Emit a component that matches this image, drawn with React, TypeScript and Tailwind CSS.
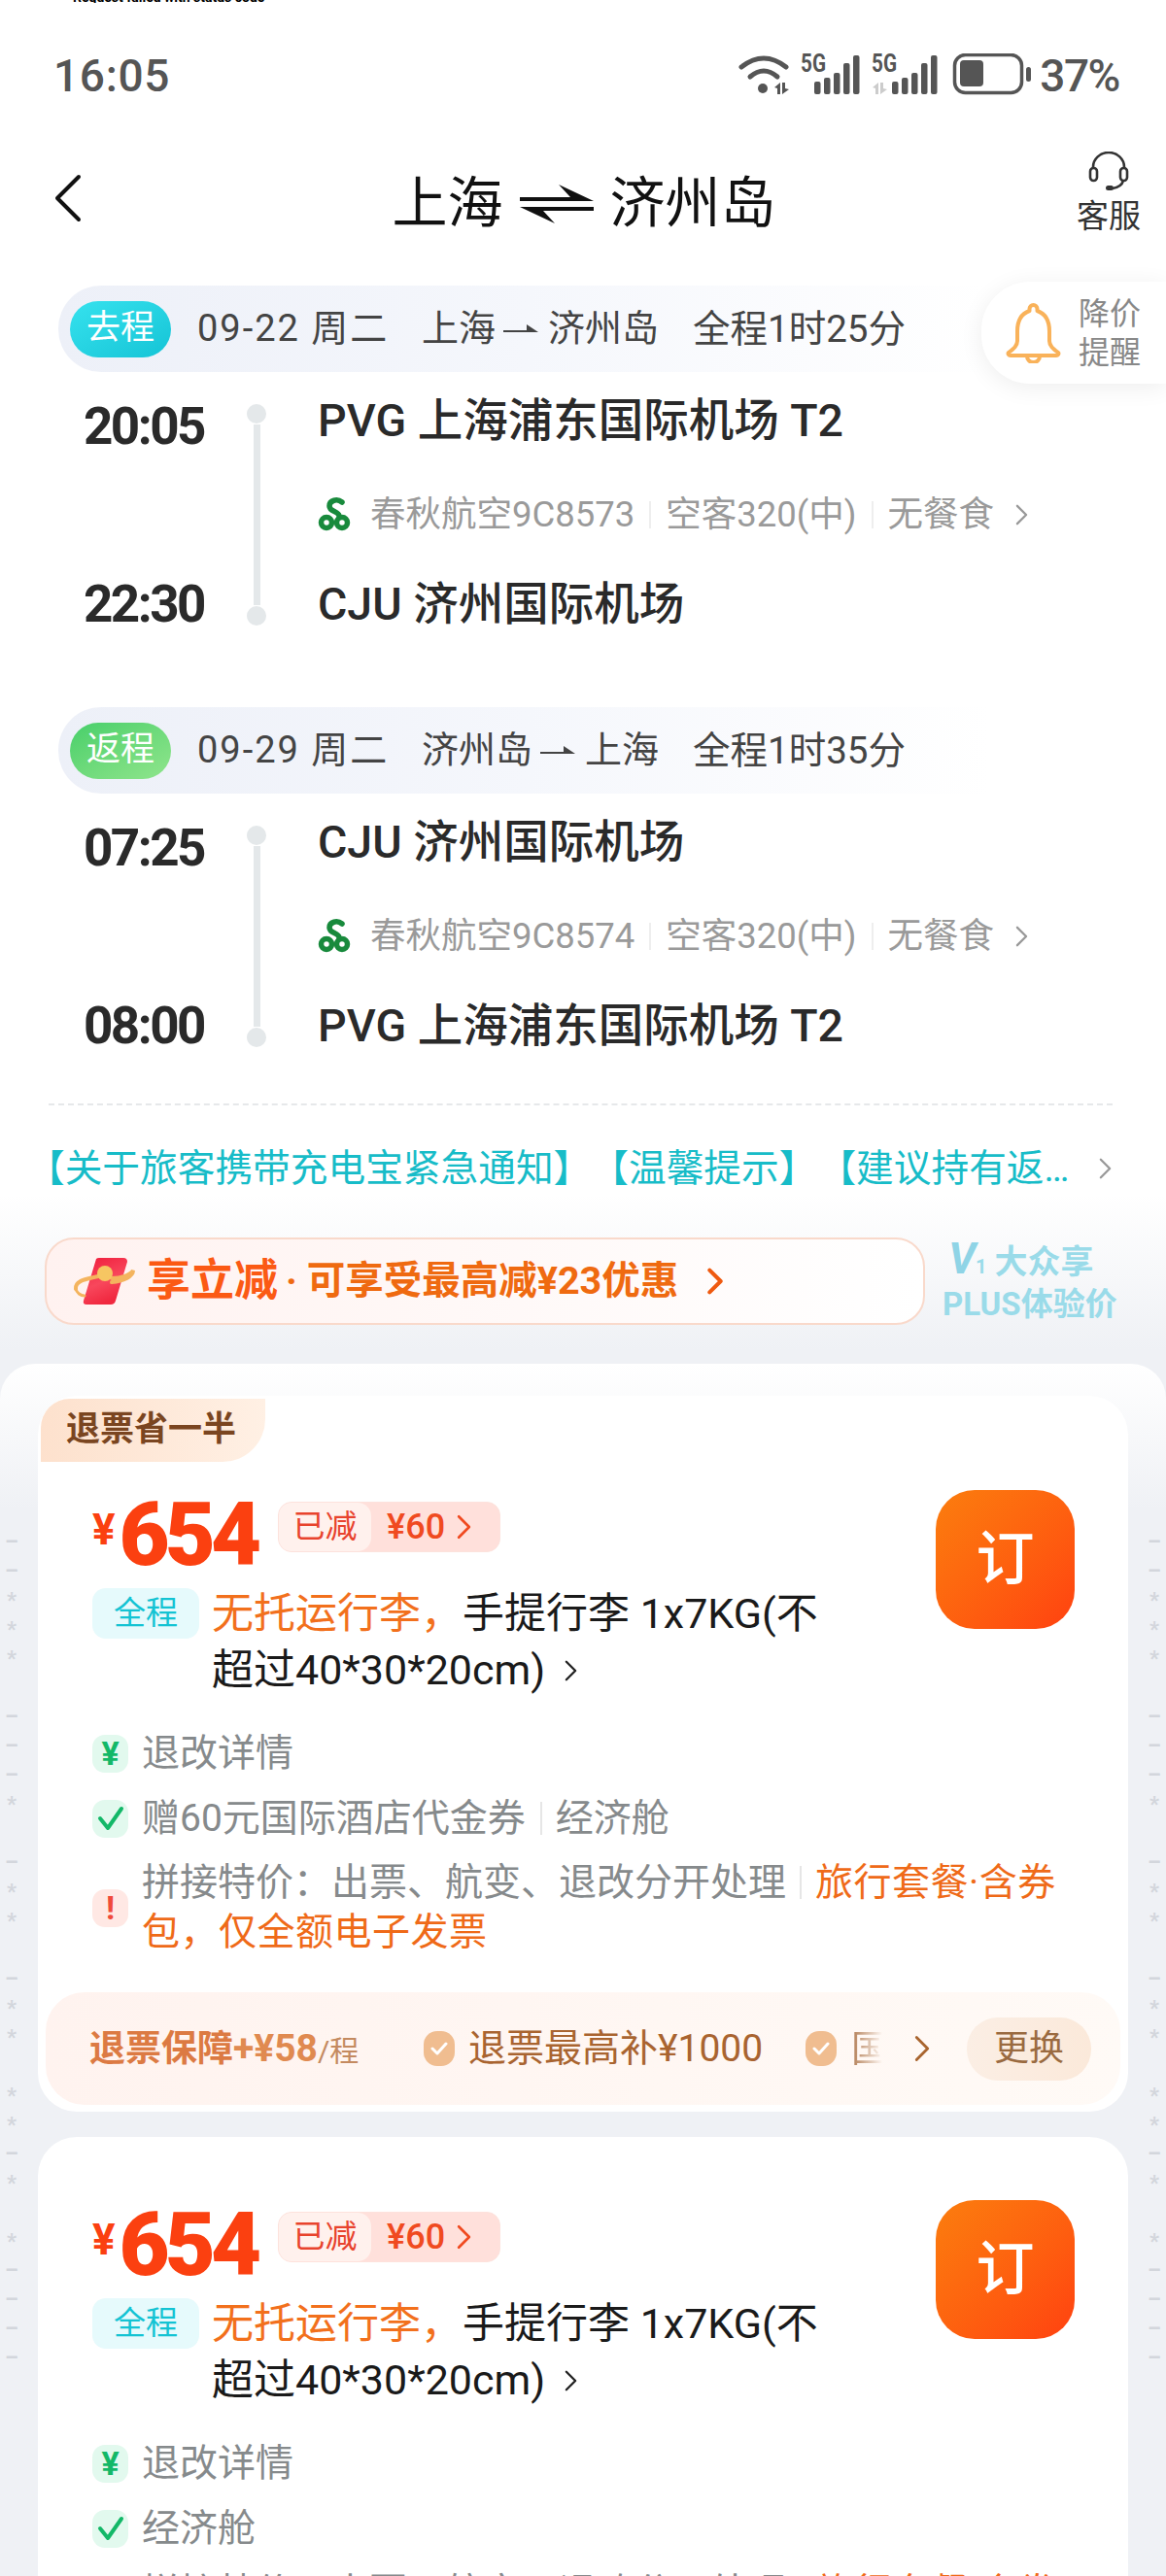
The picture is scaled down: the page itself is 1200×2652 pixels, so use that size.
import React from 'react';

const Chevron = ({className, w = 14, h = 24, sw = 2.5}: {className: string; w?: number; h?: number; sw?: number}) => (
  <svg width={w} height={h} viewBox="0 0 14 24" fill="none" className={className}>
    <path d="M2 2 L12 12 L2 22" stroke="currentColor" strokeWidth={sw} strokeLinecap="round" strokeLinejoin="round" />
  </svg>
);

const signalBars = [
  {y: 29, h: 13},
  {y: 25, h: 17},
  {y: 20, h: 22},
  {y: 10, h: 32},
  {y: 2, h: 40},
];

const StatusIcons = () => (
  <svg width="301" height="44" viewBox="0 0 301 44" className="text-[#555]">
    {/* wifi */}
    <g fill="none" stroke="currentColor" strokeWidth="5" strokeLinecap="round">
      <path d="M3 14 Q26 -4 49 14" />
      <path d="M12 24 Q26 12 40 24" />
    </g>
    <circle cx="25" cy="36" r="5" fill="currentColor" />
    <path d="M37 35 l6 -5 v12 h-3 v-6z M45 30 h3 v6 l4 1 l-7 5z" fill="currentColor" />
    {/* sim 1 */}
    <text x="64" y="19" fontFamily="Roboto" fontWeight="700" fontSize="25" fill="currentColor" textLength="26" lengthAdjust="spacingAndGlyphs">5G</text>
    {signalBars.map((b, i) => (
      <rect key={i} x={78 + i * 10} y={b.y} width="6.5" height={b.h} rx="2" fill="currentColor" />
    ))}
    {/* sim 2 */}
    <text x="137" y="19" fontFamily="Roboto" fontWeight="700" fontSize="25" fill="currentColor" textLength="26" lengthAdjust="spacingAndGlyphs">5G</text>
    <path d="M138 35 l6 -5 v12 h-3 v-6z M146 30 h3 v6 l4 1 l-7 5z" fill="#ccc" />
    {signalBars.map((b, i) => (
      <rect key={i} x={158 + i * 10} y={b.y} width="6.5" height={b.h} rx="2" fill="currentColor" />
    ))}
    {/* battery */}
    <rect x="222.5" y="1.5" width="69" height="39" rx="11" fill="none" stroke="currentColor" strokeWidth="3.5" />
    <rect x="228" y="7" width="24" height="27" rx="4" fill="currentColor" />
    <rect x="296" y="14" width="5" height="15" rx="2.5" fill="currentColor" />
  </svg>
);

const Headset = () => (
  <svg width="42" height="42" viewBox="0 0 42 42" fill="none" stroke="#333" strokeWidth="2.6">
    <path d="M5 18 V16 a16 15 0 0 1 32 0 V18" />
    <rect x="2" y="17" width="7" height="13" rx="3.5" />
    <rect x="33" y="17" width="7" height="13" rx="3.5" />
    <path d="M36 30 c-1 4 -5 7 -11 8" />
    <rect x="18" y="35" width="8" height="5" rx="2.5" fill="#333" stroke="none" />
  </svg>
);

const Bell = () => (
  <svg width="57" height="63" viewBox="0 0 57 63" fill="none" stroke="#f9b25a" strokeWidth="4" strokeLinejoin="round">
    <path d="M28.5 3 a4 4 0 0 1 4 4 v2 C41 12 45 20 45 30 v10 c0 5 4 8 9 12 c1 1 0 3 -2 3 H5 c-2 0 -3 -2 -2 -3 c5 -4 9 -7 9 -12 V30 c0 -10 4 -18 12.5 -21 V7 a4 4 0 0 1 4 -4 z" />
    <path d="M22 56 a6.5 6 0 0 0 13 0" />
  </svg>
);

const AirlineLogo = () => (
  <svg width="34" height="36" viewBox="0 0 34 36" fill="none" stroke="#188a3c" strokeWidth="5.5">
    <path d="M25 5 C20 1 12 3 12 9 C12 15 21 14 22 19" strokeLinecap="round" />
    <circle cx="9" cy="26" r="5.5" />
    <circle cx="25" cy="26" r="5.5" />
  </svg>
);

const RedPacket = () => (
  <svg width="68" height="50" viewBox="0 0 68 50" fill="none">
    <defs>
      <linearGradient id="packet" x1="0" y1="0" x2="0.4" y2="1">
        <stop offset="0" stopColor="#ef1b3a" />
        <stop offset="0.6" stopColor="#f8475c" />
        <stop offset="1" stopColor="#f0283f" />
      </linearGradient>
    </defs>
    <path d="M24 2 Q25 1 27 1 H52 Q56 1 56 5 L44 45 Q43 49 39 49 H14 Q10 49 11 45 Z" fill="url(#packet)" />
    <path d="M3 33 C2 24 14 23 26 20 M40 22 C50 22 60 18 62 14 C62 20 52 25 40 26" stroke="#f4b45e" strokeWidth="4" strokeLinecap="round" />
    <path d="M3 33 C4 37 8 40 12 40" stroke="#f4b45e" strokeWidth="3" strokeLinecap="round" />
    <circle cx="33" cy="17" r="8" fill="#f6c662" />
  </svg>
);

const RouteArrow = () => (
  <svg width="38" height="12" viewBox="0 0 38 12">
    <path d="M0 7 H24 V1 L36 9 H0 Z" fill="#444" />
  </svg>
);

const Leg = ({label, pill, date, from, to, duration, dep, arr, depAirport, arrAirport, flight}: {
  label: string;
  pill: string;
  date: string;
  from: string;
  to: string;
  duration: string;
  dep: string;
  arr: string;
  depAirport: string;
  arrAirport: string;
  flight: string;
}) => (
  <div>
    <div className="ml-[60px] w-[960px] h-[89px] flex items-center rounded-l-[44px] bg-gradient-to-r from-[#edf0f8] via-[#f5f7fc] to-white pl-[12px]">
      <div className={`w-[104px] h-[58px] rounded-[29px] flex items-center justify-center text-white text-[35px] ${pill}`}>{label}</div>
      <div className="ml-[27px] w-[195px] text-[38px] text-[#444] tracking-[2px] whitespace-nowrap">{date}</div>
      <div className="ml-[36px] w-[244px] flex items-center justify-between text-[38px] text-[#444]">
        <span>{from}</span>
        <RouteArrow />
        <span>{to}</span>
      </div>
      <div className="ml-[35px] text-[38.5px] text-[#444] whitespace-nowrap">{duration}</div>
    </div>
    <div className="mt-[20px] h-[247px] flex">
      <div className="w-[254px] pl-[60px] pt-[8px] flex flex-col justify-between">
        <div className="w-[176px] text-center text-[53px] leading-[56px] font-bold text-[#2a2a2a] tracking-[-2.5px]">{dep}</div>
        <div className="w-[176px] text-center text-[53px] leading-[56px] font-bold text-[#2a2a2a] tracking-[-2.5px]">{arr}</div>
      </div>
      <div className="w-[20px] pt-[13px] pb-[6px] flex flex-col items-center">
        <div className="w-[20px] h-[20px] rounded-full bg-[#e4e8ea]" />
        <div className="w-[7px] flex-1 my-[1px] bg-[#e4e8ea]" />
        <div className="w-[20px] h-[20px] rounded-full bg-[#e4e8ea]" />
      </div>
      <div className="ml-[53px] pt-[2px] flex flex-col justify-between">
        <div className="text-[46.5px] leading-[56px] font-medium text-[#2a2a2a] whitespace-nowrap">{depAirport}</div>
        <div className="mt-[5px] flex items-center text-[36.5px] leading-[44px] text-[#9a9a9a] whitespace-nowrap">
          <AirlineLogo />
          <span className="ml-[20px]">春秋航空{flight}</span>
          <span className="mx-[15px] w-[2px] h-[28px] bg-[#eee]" />
          <span>空客320(中)</span>
          <span className="mx-[15px] w-[2px] h-[28px] bg-[#eee]" />
          <span>无餐食</span>
          <Chevron className="ml-[22px] text-[#999]" w={13} h={22} />
        </div>
        <div className="text-[46.5px] leading-[56px] font-medium text-[#2a2a2a] whitespace-nowrap">{arrAirport}</div>
      </div>
    </div>
  </div>
);

const MiniBadge = ({tone, children}: {tone: string; children: React.ReactNode}) => (
  <div className={`w-[37px] h-[39px] shrink-0 rounded-[13px] flex items-center justify-center ${tone}`}>{children}</div>
);

const CheckSvg = ({color}: {color: string}) => (
  <svg width="28" height="26" viewBox="0 0 28 26" fill="none">
    <path d="M3 13 L11 23 L25 3" stroke={color} strokeWidth="4" strokeLinecap="round" strokeLinejoin="round" />
  </svg>
);

const SmallCheck = () => (
  <div className="w-[32px] h-[36px] shrink-0 rounded-[14px] bg-[#f0bd90] flex items-center justify-center">
    <svg width="18" height="14" viewBox="0 0 18 14" fill="none">
      <path d="M2 7 L7 12 L16 2" stroke="white" strokeWidth="3" strokeLinecap="round" strokeLinejoin="round" />
    </svg>
  </div>
);

const FareCard = ({badge, gift, bar}: {badge?: boolean; gift: boolean; bar: boolean}) => (
  <div className={`relative bg-white rounded-[40px] pb-[7px] ${badge ? 'pt-[97px]' : 'pt-[65px]'}`}>
    {badge && (
      <div className="absolute left-[3px] top-[3px] w-[231px] h-[65px] rounded-tl-[30px] rounded-br-[44px] rounded-tr-none bg-gradient-to-r from-[#fde1cd] to-[#fff0e4] flex items-center pl-[26px] text-[35px] font-bold text-[#7a4520]">
        退票省一半
      </div>
    )}
    <div className="pl-[56px] pr-[55px] flex justify-between">
      <div>
        <div className="h-[98px] flex">
          <span className="text-[44px] leading-[82px] font-bold text-[#fb4010]">¥</span>
          <span className="text-[90px] leading-[94px] font-black text-[#fb4010] tracking-[-5px] ml-[4px]">654</span>
          <div className="ml-[22px] mt-[12px] h-[52px] w-[229px] flex rounded-[14px] border border-[#fde2dc] bg-[#ffe0db] overflow-hidden">
            <div className="w-[95px] rounded-r-[14px] bg-[#fff1ed] flex items-center justify-center text-[33px] text-[#e8432d]">已减</div>
            <div className="flex-1 flex items-center pl-[16px] text-[36px] font-medium text-[#f04a20]">
              ¥60
              <Chevron className="ml-[12px] text-[#f04a20]" w={15} h={26} sw={2.5} />
            </div>
          </div>
        </div>
        <div className="flex items-start gap-[13px]">
          <div className="w-[110px] h-[52px] mt-[3px] rounded-[14px] bg-[#e6fafc] flex items-center justify-center text-[33px] text-[#14c3d3]">全程</div>
          <div className="text-[43px] leading-[58px] text-[#1a1a1a] whitespace-nowrap">
            <span className="text-[#f2701c]">无托运行李，</span>手提行李 1x7KG(不
            <br />
            超过40*30*20cm)
            <Chevron className="inline-block ml-[20px] mb-[6px] text-[#222]" w={13} h={24} />
          </div>
        </div>
      </div>
      <div className="w-[143px] h-[143px] rounded-[40px] bg-gradient-to-br from-[#fb7d0e] to-[#ff4010] flex items-center justify-center text-white text-[60px] font-medium">
        订
      </div>
    </div>
    <div className="mt-[31px] pl-[56px] flex flex-col gap-[15px] text-[39px] leading-[52px] text-[#868a8c]">
      <div className="flex items-center gap-[14px]">
        <MiniBadge tone="bg-[#e2f9ee]"><span className="text-[#13b868] text-[34px] font-bold">¥</span></MiniBadge>
        <span>退改详情</span>
      </div>
      <div className="flex items-center gap-[14px]">
        <MiniBadge tone="bg-[#e2f9ee]"><CheckSvg color="#13b868" /></MiniBadge>
        {gift ? <span>赠60元国际酒店代金券</span> : <span>经济舱</span>}
        {gift && <span className="ml-[1px] w-[2px] h-[34px] bg-[#e6e6e6]" />}
        {gift && <span>经济舱</span>}
      </div>
      <div className="flex items-center gap-[14px]">
        <MiniBadge tone="bg-[#ffe8e4]"><span className="text-[#f04a3a] text-[34px] font-bold">!</span></MiniBadge>
        <div className="leading-[51px] whitespace-nowrap">
          拼接特价：出票、航变、退改分开处理
          <span className="inline-block mx-[14px] w-[2px] h-[34px] bg-[#e6e6e6] align-[-4px]" />
          <span className="text-[#ef6a18] tracking-[0.5px]">旅行套餐·含券<br />包，仅全额电子发票</span>
        </div>
      </div>
    </div>
    {bar && (
      <div className="mt-[36px] mx-[8px] h-[116px] rounded-[40px] bg-gradient-to-r from-[#fff3ef] to-[#fffaf6] flex items-center pl-[45px]">
        <div className="w-[344px] whitespace-nowrap flex items-baseline">
          <span className="text-[37px] font-bold text-[#dc7a43]">退票保障</span>
          <span className="text-[39px] font-bold text-[#e08a50]">+¥58</span>
          <span className="text-[30px] text-[#c48a60]">/程</span>
        </div>
        <SmallCheck />
        <span className="ml-[14px] w-[306px] text-[39px] text-[#a96430] whitespace-nowrap">退票最高补¥1000</span>
        <div className="ml-[41px]"><SmallCheck /></div>
        <span className="ml-[15px] w-[32px] overflow-hidden text-[38px] whitespace-nowrap bg-gradient-to-r from-[#b07a50] to-transparent bg-clip-text text-transparent">国际</span>
        <Chevron className="ml-[33px] text-[#a9652f]" w={16} h={30} sw={2.5} />
        <div className="ml-[38px] w-[128px] h-[65px] rounded-[32px] bg-gradient-to-r from-[#fbeee4] to-[#fbe9da] flex items-center justify-center text-[36px] text-[#9a6a40]">更换</div>
      </div>
    )}
  </div>
);

const sideMarks = [
  '–', '–', '*', '*', '*', '', '–', '–', '–', '*', '', '–', '*', '*', '', '–', '*', '*', '', '*', '*',
  '–', '*', '', '*', '–', '–', '–', '–',
];

const SideMarks = ({className}: {className: string}) => (
  <div className={`absolute top-[169px] w-[24px] flex flex-col text-[#d3d6dc] text-[22px] font-bold ${className}`}>
    {sideMarks.map((m, i) => (
      <div key={i} className="h-[30px] leading-[30px] text-center">{m}</div>
    ))}
  </div>
);

const App = () => {
  return (
    <div className="relative w-[1200px] h-[2652px] overflow-hidden bg-[linear-gradient(#fff_1230px,#eff1f5_1390px)] font-['Roboto','Noto_Sans_CJK_SC',sans-serif]">
      <div className="h-[3px] overflow-hidden pl-[75px]">
        <div className="-mt-[10px] text-[14px] leading-[14px] font-bold text-black whitespace-nowrap">Request failed with status code</div>
      </div>

      {/* status bar */}
      <div className="h-[127px] pt-[52px] pl-[55px] pr-[48px] flex items-start justify-between text-[#555]">
        <span className="text-[46px] leading-[46px] font-medium tracking-[0.7px]">16:05</span>
        <div className="flex items-start">
          <StatusIcons />
          <span className="ml-[9px] text-[46px] leading-[46px] font-medium tracking-[-1.5px]">37%</span>
        </div>
      </div>

      {/* nav */}
      <div className="h-[164px] pb-[8px] relative flex items-start justify-between pl-[55px] pr-[26px]">
        <svg width="30" height="50" viewBox="0 0 30 50" fill="none" className="mt-[49px]">
          <path d="M26 3 L4 25 L26 47" stroke="#111" strokeWidth="4" strokeLinecap="round" strokeLinejoin="round" />
        </svg>
        <div className="mt-[50px] ml-[309px] flex items-center text-[57px] leading-[60px] text-[#111]">
          <span>上海</span>
          <svg width="76" height="46" viewBox="0 0 76 46" className="mx-[17px]">
            <path d="M0 16 H52 L40 3 L76 20 H0 Z" fill="#111" />
            <path d="M76 30 H24 L36 43 L0 26 H76 Z" fill="#111" />
          </svg>
          <span>济州岛</span>
        </div>
        <div className="mt-[26px] flex flex-col items-center w-[66px] ml-[300px]">
          <Headset />
          <span className="mt-[7px] text-[33px] leading-[36px] text-[#333] whitespace-nowrap">客服</span>
        </div>
      </div>

      <Leg
        label="去程"
        pill="bg-gradient-to-br from-[#35e2ee] to-[#12c4d6]"
        date="09-22 周二"
        from="上海"
        to="济州岛"
        duration="全程1时25分"
        dep="20:05"
        arr="22:30"
        depAirport="PVG 上海浦东国际机场 T2"
        arrAirport="CJU 济州国际机场"
        flight="9C8573"
      />
      <div className="h-[78px]" />
      <Leg
        label="返程"
        pill="bg-gradient-to-br from-[#45cf6a] to-[#8fe58c]"
        date="09-29 周二"
        from="济州岛"
        to="上海"
        duration="全程1时35分"
        dep="07:25"
        arr="08:00"
        depAirport="CJU 济州国际机场"
        arrAirport="PVG 上海浦东国际机场 T2"
        flight="9C8574"
      />

      <div className="mt-[52px] ml-[50px] w-[1095px] border-t-2 border-dashed border-[#e6e8ea]" />

      {/* notices */}
      <div className="h-[130px] flex items-center pl-[28px] text-[38.7px] text-[#17bcc8] whitespace-nowrap">
        <span>【关于旅客携带充电宝紧急通知】</span>
        <span>【温馨提示】</span>
        <span className="ml-[2px]">【建议持有返…</span>
        <Chevron className="ml-[31px] text-[#999]" w={13} h={24} />
      </div>

      {/* promo */}
      <div className="mt-[6px] ml-[46px] h-[90px] flex items-center">
        <div className="w-[906px] h-[90px] rounded-[30px] border-2 border-[#f9d9cb] bg-gradient-to-r from-[#fff2f0] to-white flex items-center pl-[27px] whitespace-nowrap">
          <RedPacket />
          <span className="ml-[8px] text-[45px] font-bold text-[#fb5a14]">享立减</span>
          <span className="ml-[8px] text-[39.5px] font-bold text-[#ef6a10]">· 可享受最高减¥23优惠</span>
          <Chevron className="ml-[30px] text-[#ef5a10]" w={16} h={30} sw={3.5} />
        </div>
        <div className="ml-[18px] flex flex-col items-center text-[#9adbe9] font-bold whitespace-nowrap">
          <div className="mr-[18px] text-[34px] leading-[40px] flex items-baseline">
            <span className="italic text-[44px] text-[#8fd4e6]">V</span>
            <span className="text-[20px] mr-[8px]">1</span>
            大众享
          </div>
          <div className="text-[33px] leading-[38px]">PLUS体验价</div>
        </div>
      </div>

      {/* fares */}
      <div className="relative mt-[40px] rounded-t-[36px] px-[39px] pt-[33px] bg-[linear-gradient(#fff,#eff1f5_150px)]">
        <SideMarks className="left-0" />
        <SideMarks className="right-0" />
        <div className="relative flex flex-col gap-[26px]">
          <FareCard badge gift bar />
          <FareCard gift={false} bar={false} />
        </div>
      </div>

      {/* price alert */}
      <div className="absolute left-[1010px] top-[290px] w-[190px] h-[105px] rounded-l-[50px] bg-white shadow-[0_4px_24px_rgba(0,0,0,0.07)] flex items-center pl-[25px]">
        <Bell />
        <div className="ml-[18px] text-[32px] leading-[40px] text-[#888]">
          降价
          <br />
          提醒
        </div>
      </div>
    </div>
  );
};

export default App;
